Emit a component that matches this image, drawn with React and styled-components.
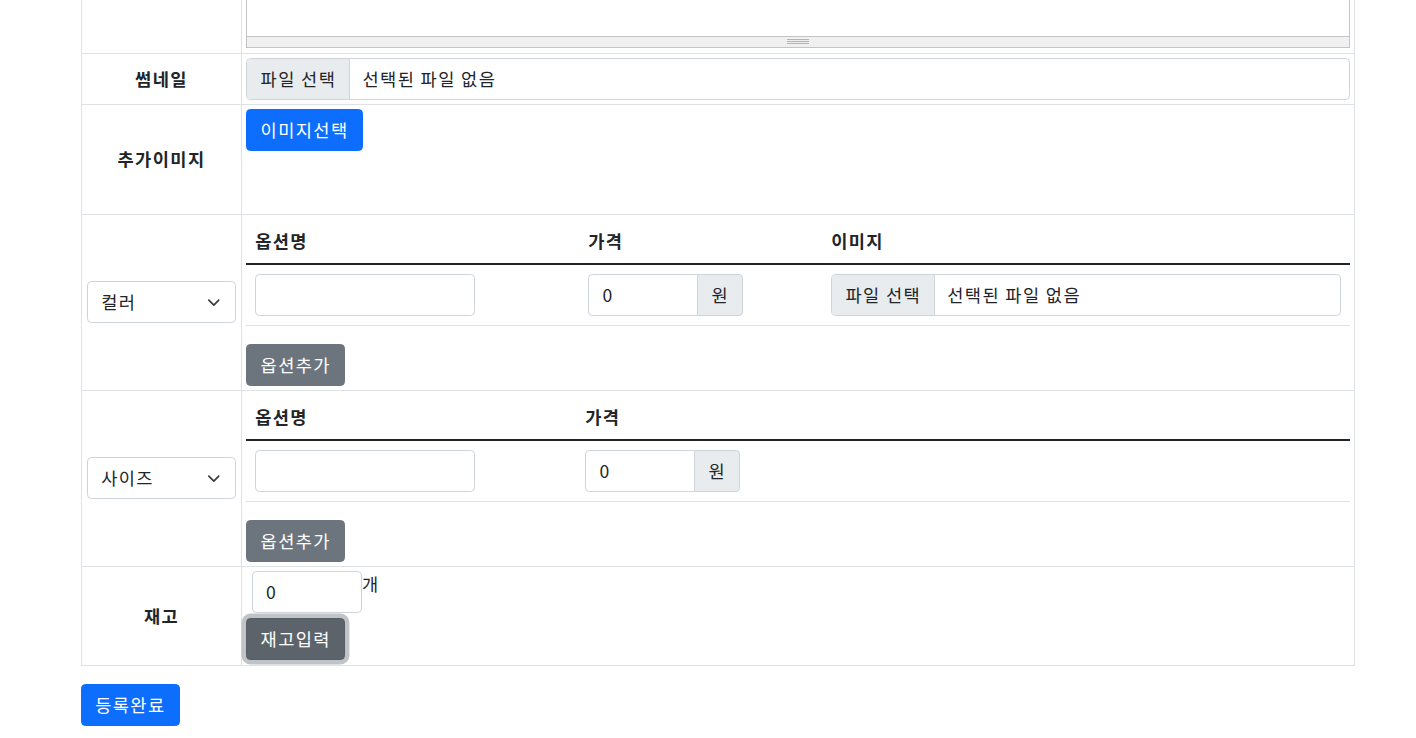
import React from "react";
import styled, { createGlobalStyle, css } from "styled-components";

const GlobalStyle = createGlobalStyle`
  * { box-sizing: border-box; }
  body {
    margin: 0;
    background: #fff;
    color: #212529;
    font-family: "Noto Sans CJK KR", "Noto Sans", sans-serif;
    font-size: 17.6px;
    line-height: 1.5;
    letter-spacing: 1.4px;
  }
`;

const Page = styled.div`
  padding-left: 81px;
  width: 1355px;
`;

const FormTable = styled.table`
  width: 1274px;
  border-collapse: collapse;
  margin-bottom: 18px;
`;

const LabelCell = styled.th`
  width: 160px;
  padding: 4px 5px;
  border: 1px solid #dee2e6;
  border-top: ${(p) => (p.$first ? "none" : "1px solid #dee2e6")};
  text-align: center;
  vertical-align: middle;
  font-weight: 700;
`;

const ContentCell = styled.td`
  padding: 4px 4.4px;
  padding-top: ${(p) => (p.$first ? "0" : "4px")};
  padding-bottom: ${(p) => (p.$first ? "5px" : "4px")};
  border: 1px solid #dee2e6;
  border-top: ${(p) => (p.$first ? "none" : "1px solid #dee2e6")};
  vertical-align: top;
`;

const EditorFrame = styled.div`
  border: 1px solid #c4c4c4;
  border-top: none;
`;

const EditorBody = styled.div`
  height: 37px;
  background: #fff;
  border-bottom: 1px solid #c4c4c4;
`;

const ResizeBar = styled.div`
  height: 10px;
  background: #f0f0f0;
  display: flex;
  align-items: center;
  justify-content: center;
`;

const Button = styled.button`
  display: inline-block;
  height: 42px;
  padding: 6px 13.2px;
  font-family: inherit;
  font-size: 17.6px;
  line-height: 28px;
  letter-spacing: 1.4px;
  color: #fff;
  border: 1px solid;
  border-radius: 4.4px;
  cursor: pointer;
  ${(p) =>
    p.$variant === "primary" &&
    css`
      background: #0d6efd;
      border-color: #0d6efd;
    `}
  ${(p) =>
    p.$variant === "secondary" &&
    css`
      background: #6c757d;
      border-color: #6c757d;
    `}
  ${(p) =>
    p.$variant === "focused" &&
    css`
      background: #5c636a;
      border-color: #565e64;
      box-shadow: 0 0 0 4.4px rgba(130, 138, 145, 0.5);
    `}
`;

const FileField = styled.div`
  display: flex;
  width: 100%;
  height: 42px;
  border: 1px solid #ced4da;
  border-radius: 4.4px;
  overflow: hidden;
  background: #fff;
`;

const FileButton = styled.span`
  padding: 6px 13.2px;
  line-height: 28px;
  background: #e9ecef;
  border-right: 1px solid #ced4da;
  white-space: nowrap;
`;

const FileName = styled.span`
  padding: 6px 12px;
  line-height: 28px;
`;

const ImagePreview = styled.div`
  min-height: 59px;
`;

const SelectWrap = styled.div`
  position: relative;
  width: 100%;
`;

const Select = styled.select`
  display: block;
  width: 100%;
  height: 42px;
  appearance: none;
  padding: 6px 39.6px 6px 13.2px;
  font-family: inherit;
  font-size: 17.6px;
  line-height: 28px;
  letter-spacing: 1.4px;
  color: #212529;
  background: #fff;
  border: 1px solid #ced4da;
  border-radius: 4.4px;
  text-align: left;
`;

const Chevron = styled.svg`
  position: absolute;
  right: 13.2px;
  top: 50%;
  margin-top: -6.6px;
  width: 17.6px;
  height: 13.2px;
  pointer-events: none;
`;

const OptionTable = styled.table`
  width: 100%;
  border-collapse: collapse;
  margin-bottom: 18px;
`;

const OptionHead = styled.th`
  width: ${(p) => p.$width || "auto"};
  padding: 8.8px;
  text-align: left;
  font-weight: 700;
  border-bottom: 2px solid #212529;
`;

const OptionCell = styled.td`
  padding: 9px 8.8px;
  border-bottom: 1px solid #dee2e6;
`;

const TextInput = styled.input`
  display: block;
  width: ${(p) => p.$width || "100%"};
  height: 42px;
  padding: 6px 13.2px;
  font-family: inherit;
  font-size: 17.6px;
  line-height: 28px;
  letter-spacing: 1.4px;
  color: #212529;
  background: #fff;
  border: 1px solid #ced4da;
  border-radius: ${(p) => (p.$grouped ? "4.4px 0 0 4.4px" : "4.4px")};
  outline: none;
`;

const InputGroup = styled.div`
  display: flex;
  width: 155px;
`;

const Addon = styled.span`
  padding: 6px 13.2px;
  line-height: 28px;
  background: #e9ecef;
  border: 1px solid #ced4da;
  border-left: none;
  border-radius: 0 4.4px 4.4px 0;
`;

const StockBox = styled.div`
  display: flex;
  flex-direction: column;
  align-items: flex-start;
  gap: 5px;
  padding-bottom: 1px;
`;

const StockLine = styled.div`
  display: flex;
  align-items: flex-start;
  padding-left: 5.5px;
`;

const Unit = styled.span`
  line-height: 26px;
`;

const ChevronIcon = () => (
  <Chevron viewBox="0 0 16 16">
    <path d="M2 5l6 6 6-6" fill="none" stroke="#343a40" strokeWidth="2" strokeLinecap="round" strokeLinejoin="round" />
  </Chevron>
);

const FileInput = () => (
  <FileField>
    <FileButton>파일 선택</FileButton>
    <FileName>선택된 파일 없음</FileName>
  </FileField>
);

const PriceInput = () => (
  <InputGroup>
    <TextInput $grouped defaultValue="0" />
    <Addon>원</Addon>
  </InputGroup>
);

const OptionRow = ({ kind, columns, withImage }) => (
  <tr>
    <LabelCell>
      <SelectWrap>
        <Select defaultValue={kind}>
          <option>{kind}</option>
        </Select>
        <ChevronIcon />
      </SelectWrap>
    </LabelCell>
    <ContentCell>
      <OptionTable>
        <thead>
          <tr>
            <OptionHead $width={columns[0]}>옵션명</OptionHead>
            <OptionHead $width={columns[1]}>가격</OptionHead>
            {withImage && <OptionHead>이미지</OptionHead>}
          </tr>
        </thead>
        <tbody>
          <tr>
            <OptionCell>
              <TextInput $width="220px" />
            </OptionCell>
            <OptionCell>
              <PriceInput />
            </OptionCell>
            {withImage && (
              <OptionCell>
                <FileInput />
              </OptionCell>
            )}
          </tr>
        </tbody>
      </OptionTable>
      <Button $variant="secondary">옵션추가</Button>
    </ContentCell>
  </tr>
);

export default function App() {
  return (
    <>
      <GlobalStyle />
      <Page>
        <FormTable>
          <tbody>
            <tr>
              <LabelCell $first />
              <ContentCell $first>
                <EditorFrame>
                  <EditorBody />
                  <ResizeBar>
                    <svg width="22" height="6" viewBox="0 0 22 6">
                      <rect x="0" y="0" width="22" height="1" fill="#b4b4b4" />
                      <rect x="0" y="2" width="22" height="1" fill="#b4b4b4" />
                      <rect x="0" y="4" width="22" height="1" fill="#b4b4b4" />
                    </svg>
                  </ResizeBar>
                </EditorFrame>
              </ContentCell>
            </tr>
            <tr>
              <LabelCell>썸네일</LabelCell>
              <ContentCell>
                <FileInput />
              </ContentCell>
            </tr>
            <tr>
              <LabelCell>추가이미지</LabelCell>
              <ContentCell>
                <Button $variant="primary">이미지선택</Button>
                <ImagePreview />
              </ContentCell>
            </tr>
            <OptionRow kind="컬러" columns={["333px", "243px"]} withImage />
            <OptionRow kind="사이즈" columns={["330px", "auto"]} />
            <tr>
              <LabelCell>재고</LabelCell>
              <ContentCell>
                <StockBox>
                  <StockLine>
                    <TextInput $width="110px" defaultValue="0" />
                    <Unit>개</Unit>
                  </StockLine>
                  <Button $variant="focused">재고입력</Button>
                </StockBox>
              </ContentCell>
            </tr>
          </tbody>
        </FormTable>
        <Button $variant="primary">등록완료</Button>
      </Page>
    </>
  );
}
